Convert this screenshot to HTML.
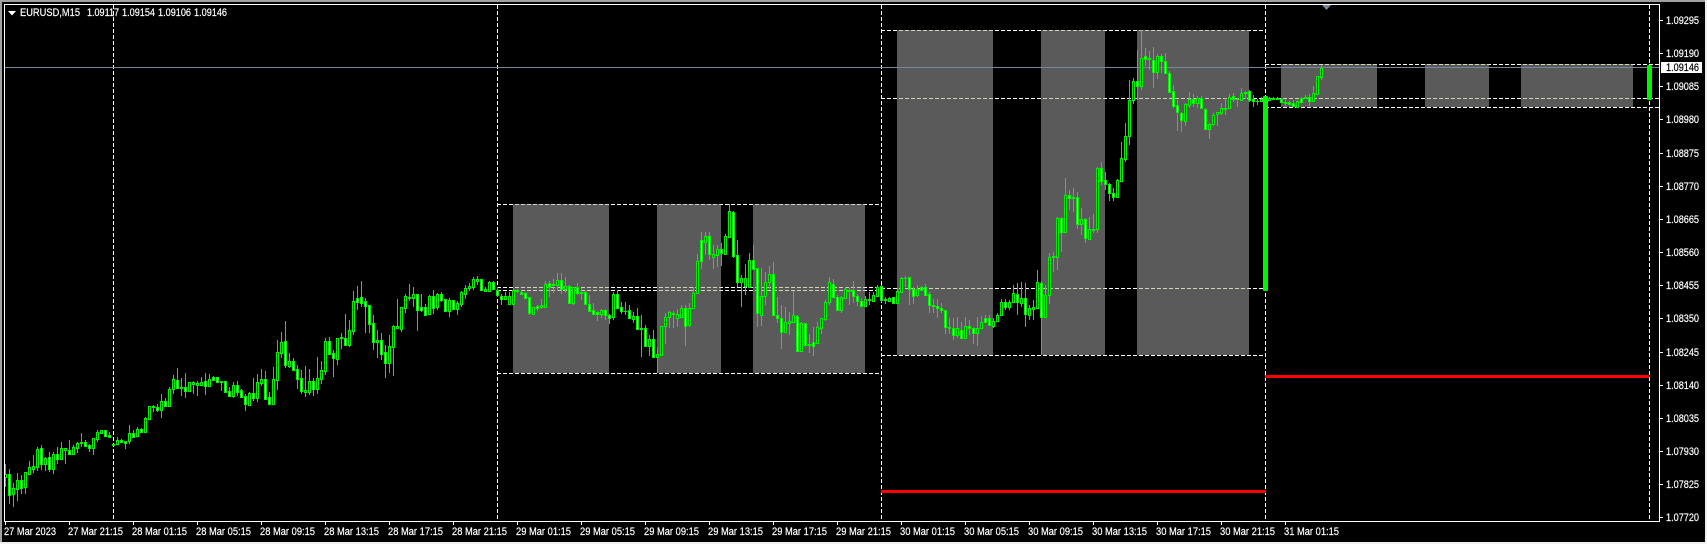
<!DOCTYPE html>
<html>
<head>
<meta charset="utf-8">
<title>EURUSD,M15</title>
<style>
html,body{margin:0;padding:0;background:#000;width:1707px;height:544px;overflow:hidden}
svg{display:block;position:absolute;left:0;top:0}
text{font-family:"Liberation Sans",sans-serif;font-size:11px;fill:#fff;stroke:#fff;stroke-width:.2px}
</style>
</head>
<body>
<svg id="c" width="1707" height="544" viewBox="0 0 1707 544" xmlns="http://www.w3.org/2000/svg">
<rect width="1707" height="544" fill="#000"/>
<rect x="0" y="0" width="1707" height="2" fill="#a0a0a0"/>
<rect x="0" y="0" width="2" height="544" fill="#a0a0a0"/>
<rect x="1705" y="0" width="2" height="544" fill="#f0f0f0"/>
<rect x="0" y="542" width="1707" height="2" fill="#f0f0f0"/>

<g fill="#5a5a5a" shape-rendering="crispEdges">
<rect x="513" y="204" width="96" height="169"/>
<rect x="657" y="204" width="64" height="169"/>
<rect x="753" y="204" width="112" height="169"/>
<rect x="897" y="30" width="96" height="325"/>
<rect x="1041" y="30" width="64" height="325"/>
<rect x="1137" y="30" width="112" height="325"/>
<rect x="1281" y="64" width="96" height="43"/>
<rect x="1425" y="64" width="64" height="43"/>
<rect x="1521" y="64" width="112" height="43"/>
</g>

<g stroke="#fff" stroke-width="1" stroke-dasharray="4 2" shape-rendering="crispEdges" fill="none">
<path d="M113.5 5V521M497.5 5V521M881.5 5V521M1265.5 5V521M1649.5 5V521"/>
<path d="M497 204.5H881M497 373.5H881M497 287.5H881M497 290.5H881"/>
<path d="M881 30.5H1265M881 355.5H1265M881 98.5H1265M881 288.5H1265"/>
<path d="M1265 64.5H1659M1265 107.5H1659M1265 98.5H1659"/>
</g>
<g stroke="#d4d4bc" stroke-width="1" shape-rendering="crispEdges" fill="none" clip-path="url(#zones)">
<path stroke-dasharray="4 2" d="M497 204.5H881M497 287.5H881M497 290.5H881"/>
<path stroke-dasharray="4 2" d="M881 30.5H1265M881 98.5H1265M881 288.5H1265"/>
<path stroke-dasharray="4 2" d="M1265 64.5H1659M1265 98.5H1659"/>
</g>
<defs><clipPath id="zones">
<rect x="513" y="204" width="96" height="169"/><rect x="657" y="204" width="64" height="169"/><rect x="753" y="204" width="112" height="169"/>
<rect x="897" y="30" width="96" height="325"/><rect x="1041" y="30" width="64" height="325"/><rect x="1137" y="30" width="112" height="325"/>
<rect x="1281" y="64" width="96" height="43"/><rect x="1425" y="64" width="64" height="43"/><rect x="1521" y="64" width="112" height="43"/>
</clipPath></defs>

<rect x="5" y="67" width="1655" height="1" fill="#778899"/>

<g id="cand" shape-rendering="crispEdges"></g>

<rect x="1263" y="96" width="5" height="195" rx="1" fill="#00f500"/>
<rect x="1647" y="65" width="5" height="35" rx="1.5" fill="#00f500"/>

<rect x="881" y="490" width="385" height="3" fill="#ff0000"/>
<rect x="1265" y="375" width="384" height="3" fill="#ff0000"/>

<polygon points="1322,5 1331,5 1326.5,10" fill="#778899"/>

<g fill="#fff" shape-rendering="crispEdges">
<rect x="4" y="4" width="1656" height="1"/>
<rect x="4" y="4" width="1" height="518"/>
<rect x="1659" y="4" width="1" height="518"/>
<rect x="4" y="521" width="1656" height="1"/>
<path d="M5 522h1v3h-1zM69 522h1v3h-1zM133 522h1v3h-1zM197 522h1v3h-1zM261 522h1v3h-1zM325 522h1v3h-1zM389 522h1v3h-1zM453 522h1v3h-1zM517 522h1v3h-1zM581 522h1v3h-1zM645 522h1v3h-1zM709 522h1v3h-1zM773 522h1v3h-1zM837 522h1v3h-1zM901 522h1v3h-1zM965 522h1v3h-1zM1029 522h1v3h-1zM1093 522h1v3h-1zM1157 522h1v3h-1zM1221 522h1v3h-1zM1285 522h1v3h-1z"/>
<path d="M1660 20h3v1h-3zM1660 53h3v1h-3zM1660 86h3v1h-3zM1660 119h3v1h-3zM1660 153h3v1h-3zM1660 186h3v1h-3zM1660 219h3v1h-3zM1660 252h3v1h-3zM1660 285h3v1h-3zM1660 318h3v1h-3zM1660 352h3v1h-3zM1660 385h3v1h-3zM1660 418h3v1h-3zM1660 451h3v1h-3zM1660 484h3v1h-3zM1660 517h3v1h-3z"/>
</g>

<polygon points="8,11 16,11 12,15.5" fill="#fff"/>
<text x="20" y="16" textLength="60" lengthAdjust="spacingAndGlyphs">EURUSD,M15</text>
<text x="87" y="16" textLength="32" lengthAdjust="spacingAndGlyphs">1.09117</text>
<text x="122" y="16" textLength="33" lengthAdjust="spacingAndGlyphs">1.09154</text>
<text x="158" y="16" textLength="33" lengthAdjust="spacingAndGlyphs">1.09106</text>
<text x="194" y="16" textLength="33" lengthAdjust="spacingAndGlyphs">1.09146</text>

<g>
<text x="1666" y="24" textLength="33" lengthAdjust="spacingAndGlyphs">1.09295</text>
<text x="1666" y="57" textLength="33" lengthAdjust="spacingAndGlyphs">1.09190</text>
<text x="1666" y="90" textLength="33" lengthAdjust="spacingAndGlyphs">1.09085</text>
<text x="1666" y="123" textLength="33" lengthAdjust="spacingAndGlyphs">1.08980</text>
<text x="1666" y="157" textLength="33" lengthAdjust="spacingAndGlyphs">1.08875</text>
<text x="1666" y="190" textLength="33" lengthAdjust="spacingAndGlyphs">1.08770</text>
<text x="1666" y="223" textLength="33" lengthAdjust="spacingAndGlyphs">1.08665</text>
<text x="1666" y="256" textLength="33" lengthAdjust="spacingAndGlyphs">1.08560</text>
<text x="1666" y="289" textLength="33" lengthAdjust="spacingAndGlyphs">1.08455</text>
<text x="1666" y="322" textLength="33" lengthAdjust="spacingAndGlyphs">1.08350</text>
<text x="1666" y="356" textLength="33" lengthAdjust="spacingAndGlyphs">1.08245</text>
<text x="1666" y="389" textLength="33" lengthAdjust="spacingAndGlyphs">1.08140</text>
<text x="1666" y="422" textLength="33" lengthAdjust="spacingAndGlyphs">1.08035</text>
<text x="1666" y="455" textLength="33" lengthAdjust="spacingAndGlyphs">1.07930</text>
<text x="1666" y="488" textLength="33" lengthAdjust="spacingAndGlyphs">1.07825</text>
<text x="1666" y="521" textLength="33" lengthAdjust="spacingAndGlyphs">1.07720</text>
</g>

<rect x="1661" y="62" width="41" height="11" fill="#fff"/>
<text x="1666" y="71" textLength="33" lengthAdjust="spacingAndGlyphs" style="fill:#000;stroke:#000">1.09146</text>

<g>
<text x="4" y="535" textLength="52" lengthAdjust="spacingAndGlyphs">27 Mar 2023</text>
<text x="68" y="535" textLength="55" lengthAdjust="spacingAndGlyphs">27 Mar 21:15</text>
<text x="132" y="535" textLength="55" lengthAdjust="spacingAndGlyphs">28 Mar 01:15</text>
<text x="196" y="535" textLength="55" lengthAdjust="spacingAndGlyphs">28 Mar 05:15</text>
<text x="260" y="535" textLength="55" lengthAdjust="spacingAndGlyphs">28 Mar 09:15</text>
<text x="324" y="535" textLength="55" lengthAdjust="spacingAndGlyphs">28 Mar 13:15</text>
<text x="388" y="535" textLength="55" lengthAdjust="spacingAndGlyphs">28 Mar 17:15</text>
<text x="452" y="535" textLength="55" lengthAdjust="spacingAndGlyphs">28 Mar 21:15</text>
<text x="516" y="535" textLength="55" lengthAdjust="spacingAndGlyphs">29 Mar 01:15</text>
<text x="580" y="535" textLength="55" lengthAdjust="spacingAndGlyphs">29 Mar 05:15</text>
<text x="644" y="535" textLength="55" lengthAdjust="spacingAndGlyphs">29 Mar 09:15</text>
<text x="708" y="535" textLength="55" lengthAdjust="spacingAndGlyphs">29 Mar 13:15</text>
<text x="772" y="535" textLength="55" lengthAdjust="spacingAndGlyphs">29 Mar 17:15</text>
<text x="836" y="535" textLength="55" lengthAdjust="spacingAndGlyphs">29 Mar 21:15</text>
<text x="900" y="535" textLength="55" lengthAdjust="spacingAndGlyphs">30 Mar 01:15</text>
<text x="964" y="535" textLength="55" lengthAdjust="spacingAndGlyphs">30 Mar 05:15</text>
<text x="1028" y="535" textLength="55" lengthAdjust="spacingAndGlyphs">30 Mar 09:15</text>
<text x="1092" y="535" textLength="55" lengthAdjust="spacingAndGlyphs">30 Mar 13:15</text>
<text x="1156" y="535" textLength="55" lengthAdjust="spacingAndGlyphs">30 Mar 17:15</text>
<text x="1220" y="535" textLength="55" lengthAdjust="spacingAndGlyphs">30 Mar 21:15</text>
<text x="1284" y="535" textLength="55" lengthAdjust="spacingAndGlyphs">31 Mar 01:15</text>
</g>
</svg>
<script>
var S=[
[0,260,[612,642,652,680,0,628,642,704,732,1,670,684,702,740,0,640,660,686,722,0,645,660,684,702,1,635,636,680,702,0,603,622,642,644,0,586,618,626,640,0,560,568,620,632,0,556,564,612,630,1,590,594,612,632,0,576,592,626,636,1,576,582,626,642,0,560,583,596,612,1,546,565,596,600,0,565,565,571,612,0,540,571,581,582,1,555,562,582,584,0,545,549,563,580,0,519,546,548,562,0,540,547,557,562,1,552,556,563,576,1,534,534,563,585,0,510,517,537,545,0,511,511,518,520,0,510,511,527,528,1,517,526,530,530,1,
552,552,554,555,0,532,541,553,554,0,537,541,547,549,1,544,544,548,567,1,495,520,542,552,0,510,520,530,532,1,500,508,527,530,0,503,508,515,520,1,472,475,515,518,0,438,439,477,479,0,435,438,442,455,1,432,442,450,456,1,403,424,450,474,0,415,424,437,438,1,380,388,437,438,0,345,358,388,402,0,324,360,384,385,1,355,381,383,408,0,340,382,392,414,1,365,367,394,396,0,364,367,371,402,0,364,370,374,408,0,352,367,375,378,0,340,364,378,404,1,342,358,378,380,0,348,351,359,362,1,350,351,366,370,1,363,364,366,392,0,363,364,396,398,1,382,394,407,410,1,366,376,407,414,0,362,376,396,408,1,387,391,411,413,1,403,408,431,452,1,397,400,434,435,0,354,400,413,422,1,342,366,413,425,0,328,358,368,378,0,332,358,416,418,1,396,412,431,434,1,322,358,431,432,0,
240,277,359,390,0,216,247,279,294,0,183,244,315,325,1,280,304,318,324,0,295,304,329,333,1,316,328,356,388,1,330,355,392,402,1,318,390,396,410,0,328,364,396,405,0,355,364,386,408,1,292,355,388,402,0,304,330,357,372,0,235,244,332,345,0,232,244,282,285,1,270,280,293,350,1,235,235,296,314,0,218,232,234,268,0,162,233,254,258,1,180,211,256,262,0,94,124,212,225,0,78,115,125,150,1,64,112,128,140,1,115,124,137,218,1,135,136,191,220,1,165,190,245,270,1,210,240,246,294,0,220,240,281,300,1,255,277,308,353,1,225,259,309,338,0,195,199,260,348,0,117,199,204,206,0,140,141,206,216,0,102,109,143,160,0,72,111,113,122,0,82,103,113,140,0,103,103,149,212,1,102,142,150,156,1,132,142,164,168,1,104,108,162,166,0,90,108,144,162,1,100,103,142,150,0,97,103,119,126,1,116,118,152,154,1,114,120,152,170,0,120,121,146,148,1,124,130,146,164,0,94,97,131,140,0,74,85,101,116,0,68,79,83,93,0,52,58,80,90,0,48,58,62,75,0,58,58,89,91,1,80,88,92,96,0,64,65,92,96,0,64,65,87,90,1,80,91,106,110,1]],
[124,190,[312,317,326,345,1,305,319,326,328,0,306,319,341,342,0,295,301,341,342,0,296,301,304,310,0,300,305,312,316,1,305,310,324,328,1,320,322,368,374,1,350,352,371,374,0,345,347,353,362,1,328,346,350,356,0,272,283,350,352,0,272,280,290,322,1,268,283,286,310,0,250,271,285,302,0,250,271,297,312,1,262,287,297,310,0,285,287,339,340,1,290,291,340,345,0,280,292,308,315,1,294,307,310,330,0,302,307,341,345,1,315,341,362,365,1,340,359,372,375,1,364,367,373,392,1,358,361,373,385,0,358,361,374,390,1,372,374,383,402,1,305,313,380,390,0,300,313,353,355,1,335,352,362,372,1,335,362,364,375,0,345,361,385,388,1,365,377,387,398,0,355,377,416,418,1,375,415,417,500,0,405,415,467,470,1,435,448,467,498,0,420,448,502,504,1,470,493,502,550,0,408,409,494,495,0,370,380,409,462,0,362,367,380,415,0,362,369,371,415,0,358,373,383,410,0,345,355,382,385,0,345,354,407,468,1,340,353,406,412,0,290,310,353,356,0,192,214,308,310,0,126,151,214,236,1,126,139,155,194,0,125,139,193,210,1,165,193,200,236,0,165,176,196,232,0,160,176,190,228,1,132,139,191,196,0,42,64,140,140,0,64,67,197,204,1,150,194,275,290,1,255,263,275,350,0,222,263,289,315,0,190,211,291,293,0,165,211,237,240,1,233,233,370,410,1,235,319,374,408,0,245,277,319,345,0,228,253,275,296,0,216,253,374,376,1,320,374,383,400,1,345,383,425,476,1,352,397,425,428,0,365,394,398,435,0,302,376,395,400,0,375,379,483,485,1,395,400,483,485,0,398,400,466,470,1,432,462,466,488,0,412,457,467,498,1,395,412,458,460,0,384,385,413,432,0,330,337,387,392,0,262,277,337,345,0,268,281,322,325,1,316,322,359,362,1,318,320,359,368,0,290,298,323,325,0,295,299,302,345,0,273,301,317,338,1,312,317,334,348,1,325,334,347,348,1,318,328,347,350,0,305,328,331,345,0,305,316,332,335,0,285,292,318,322,0,285,288,330,335,1,320,327,331,342,0,320,323,333,336,0,320,322,338,340,1,295,304,338,340,0]],
[224,20,[772,775,815,815,0,768,773,775,800,0,771,772,808,855,1,800,808,827,852,1,795,808,824,830,0,798,802,809,812,1,793,802,824,828,1,815,823,856,878,1,838,855,859,880,0,838,859,863,895,1,850,863,871,880,1,870,871,920,942,1,895,922,924,942,0,895,923,944,960,1,892,925,945,955,0,905,929,955,958,1,892,917,953,956,0,900,917,923,945,1,922,923,940,972,1,890,925,940,978,0,888,905,925,928,0,885,893,905,910,1,885,893,916,918,1,895,902,917,925,0,878,886,903,905,0,838,845,886,888,0,838,845,860,870,1,840,847,860,870,0,795,818,845,845,0,790,821,847,885,1,785,835,849,862,0,788,835,883,920,1,855,865,884,900,0,840,862,866,900,0,750,787,865,868,0,782,790,890,1005,1,795,824,890,892,0,700,712,826,852,0,695,708,710,755,0,590,595,710,750,0,590,595,635,695,1,474,526,635,638,0,510,526,535,570,1,505,532,535,575,0,516,532,613,628,1,565,598,612,645,0,595,598,655,668,1,590,628,657,660,0,582,628,630,638,0,440,445,628,638,0,426,445,482,495,1,456,481,491,510,1,490,491,518,543,1,505,520,530,543,1,478,481,530,532,0,366,415,483,486,0,310,347,416,425,0,180,241,347,375,0,175,184,241,252,0,90,184,199,240,1,30,113,199,210,0,85,109,116,138,1,92,115,118,150,0,82,119,157,205,1,102,109,157,178,0,102,109,124,160,1,99,122,160,162,1,152,160,215,218,1,195,214,259,265,1,240,256,277,332,1,275,278,299,335,1,248,253,302,318,0,216,238,254,265,0,222,238,248,262,1,228,235,248,265,0,228,235,265,265,1,265,266,326,328,1,310,311,326,357,0,280,284,311,318,0,275,277,283,318,0,250,265,278,285,0,235,263,266,285,0,222,230,263,265,0,218,229,237,245,1,235,236,238,262,0,205,218,241,242,0,212,215,218,237,0,210,214,240,245,1]],
[312,0,[285,297,304,320,1,298,302,303,315,0,292,296,304,306,0]],
[316,0,[292,294,300,303,0,290,293,296,298,0,292,295,296,300,0,295,296,305,308,1,298,306,308,318,0,302,306,311,316,1,300,310,318,322,1,300,302,320,321,0,290,295,305,306,1,285,290,295,298,0,282,290,302,318,1,258,280,302,305,0,228,229,282,284,0,195,203,230,240,0]]
];
var g2="",w2="",k2="";
S.forEach(function(s){
  var d=s[2],n=s[0],b=s[1];
  for(var i=0;i+4<d.length;i+=5){
    var x=5+4*(n+i/5);
    var h=Math.round(b+d[i]/3),t=Math.round(b+d[i+1]/3),bt=Math.round(b+d[i+2]/3),l=Math.round(b+d[i+3]/3);
    if(l>h) g2+="M"+x+" "+h+"h1V"+l+"h-1z";
    g2+="M"+(x-1)+" "+t+"h3V"+(bt+1)+"h-3z";
    if(bt-t>=2){
      if(d[i+4]) w2+="M"+x+" "+(t+1)+"h1V"+bt+"h-1z";
      else k2+="M"+x+" "+(t+1)+"h1V"+bt+"h-1z";
    }
  }
});
document.getElementById("cand").innerHTML='<path fill="#00f000" d="'+g2+'"/><path fill="#000" d="'+k2+'"/><path fill="#fff" d="'+w2+'"/>';
</script>
</body>
</html>
